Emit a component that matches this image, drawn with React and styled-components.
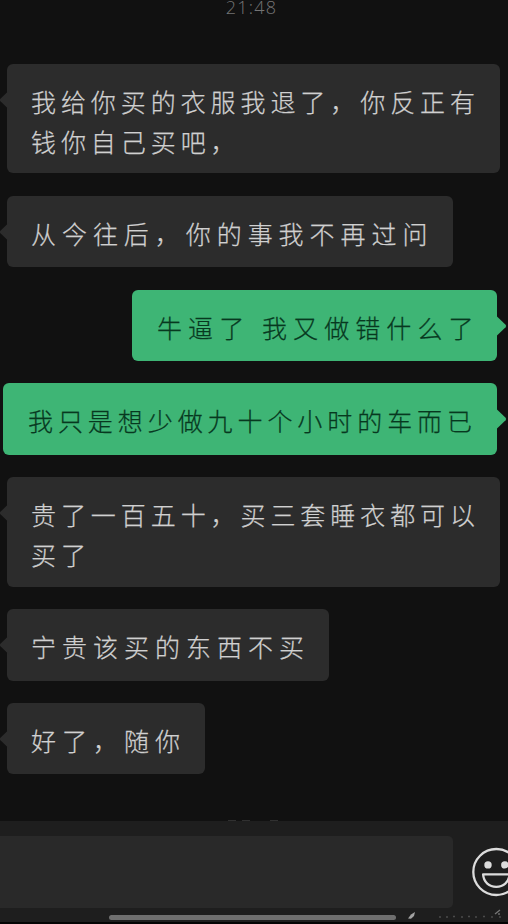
import React from 'react'
import styled, { createGlobalStyle } from 'styled-components';

const messages = [
    { id: 1, lines: ["我给你买的衣服我退了，你反正有", "钱你自己买吧，"], width: 493, pitch: 29.93 },
    { id: 2, lines: ["从今往后，你的事我不再过问"], width: 446, pitch: 30.95 },
    { id: 3, mine: true, lines: ["牛逼了 我又做错什么了"], width: 365, pitch: 31.1 },
    { id: 4, mine: true, lines: ["我只是想少做九十个小时的车而已"], width: 494, pitch: 29.93 },
    { id: 5, lines: ["贵了一百五十，买三套睡衣都可以", "买了"], width: 493, pitch: 29.93 },
    { id: 6, lines: ["宁贵该买的东西不买"], width: 322, pitch: 31 },
    { id: 7, lines: ["好了，随你"], width: 198, pitch: 31 },
]

export default function App() {
    return (
        <>
            <GlobalStyle />
            <Screen>
                <TimeText>21:48</TimeText>
                <MessageList>
                    {messages.map((m) => (
                        <Message key={m.id} {...m} />
                    ))}
                </MessageList>
                <NextTime>
                    <i /><i /><i />
                </NextTime>
                <InputBar>
                    <InputField />
                    <SmileIcon />
                </InputBar>
                <BottomArea>
                    <HomeIndicator />
                    <Specks />
                </BottomArea>
            </Screen>
        </>
    )
}

function Message(props) {
    return (
        <Bubble $mine={props.mine} $width={props.width} $double={props.lines.length > 1}>
            <Tail $mine={props.mine} viewBox="0 0 10 20">
                <path d={props.mine ? "M0 0.5 L8.6 8.8 Q9.8 10 8.6 11.2 L0 19.5 Z" : "M10 0.5 L1.4 8.8 Q0.2 10 1.4 11.2 L10 19.5 Z"} />
            </Tail>
            {props.lines.map((line) => (
                <Line key={line} $pitch={props.pitch}>{line}</Line>
            ))}
        </Bubble>
    )
}

function SmileIcon() {
    return (
        <Smile viewBox="0 0 50 50">
            <circle cx="25.3" cy="25" r="23" fill="none" stroke="#dcdcdc" strokeWidth="2.3" />
            <circle cx="17" cy="17.9" r="3.7" fill="#dcdcdc" />
            <circle cx="33.8" cy="17.9" r="3.7" fill="#dcdcdc" />
            <path d="M12.1 27.4 H38.5 C37.9 35.4 32.3 39.8 25.3 39.8 S12.7 35.4 12.1 27.4 Z" fill="none" stroke="#dcdcdc" strokeWidth="2.3" strokeLinejoin="round" />
        </Smile>
    )
}

function Specks() {
    return (
        <SpeckArea viewBox="0 0 100 16">
            <path d="M1 9.5 L4 5.5 L8 3 L7 7 L4 9.8 Z" fill="#a2a2a2" />
            <path d="M32 8 H34 M39 8 H41 M46 7.5 H48 M54 8 H56 M61 7.5 H63 M68 8 H70 M76 7.5 H78 M84 8 H86 M92 8 H94" stroke="#4b4b4b" strokeWidth="1.3" />
            <path d="M88 5 L93 1 M92 4 V6" stroke="#777" strokeWidth="1.3" />
        </SpeckArea>
    )
}

const GlobalStyle = createGlobalStyle`
body{
    margin:0;
    background:#111111;
    overflow:hidden;
}
`

const Screen = styled.div`
display:flex;
flex-direction:column;
width:508px;
height:924px;
overflow:hidden;
background:#111111;
font-family:"Noto Sans CJK SC",sans-serif;
`

const TimeText = styled.div`
flex-shrink:0;
height:64px;
padding-right:5px;
box-sizing:border-box;
text-align:center;
font-family:"Open Sans","Noto Sans CJK SC",sans-serif;
font-size:18px;
font-weight:300;
line-height:15px;
letter-spacing:1.2px;
color:#747474;
`

const MessageList = styled.div`
display:flex;
flex-direction:column;
gap:22.35px;
flex-shrink:0;
height:755.5px;
padding:0 11px 0 7px;
box-sizing:border-box;
`

const Bubble = styled.div`
position:relative;
flex-shrink:0;
align-self:${props => props.$mine ? "flex-end" : "flex-start"};
width:${props => props.$width}px;
height:${props => props.$double ? "109.4px" : "71.5px"};
margin-left:${props => props.$mine ? "-4px" : "0"};
padding:17px 0 0 24px;
padding-left:${props => props.$mine ? "25px" : "24px"};
box-sizing:border-box;
border-radius:6px;
background:${props => props.$mine ? "#3eb575" : "#2c2c2c"};
color:${props => props.$mine ? "#07381f" : "#d0d0d0"};
`

const Tail = styled.svg`
position:absolute;
top:26px;
${props => props.$mine ? "right:-10px;" : "left:-8px;"}
width:10px;
height:20px;
fill:${props => props.$mine ? "#3eb575" : "#2c2c2c"};
`

const Line = styled.div`
height:40px;
line-height:40px;
font-size:25px;
font-weight:300;
letter-spacing:${props => props.$pitch - 25}px;
white-space:pre;
-webkit-text-stroke:0.25px currentColor;
`

// only the top edge of the next timestamp shows above the input bar
const NextTime = styled.div`
display:flex;
flex-shrink:0;
gap:6px;
height:1px;
padding-left:228px;

i{
    width:8px;
    height:1px;
    background:#303030;
}
i:last-child{
    margin-left:14px;
}
`

const InputBar = styled.div`
display:flex;
align-items:flex-start;
gap:18px;
flex-shrink:0;
height:88px;
padding-top:15.5px;
box-sizing:border-box;
background:#1e1e1e;
`

const InputField = styled.div`
flex-shrink:0;
width:453px;
height:72px;
border-radius:0 5px 5px 0;
background:#292929;
`

const Smile = styled.svg`
flex-shrink:0;
width:50px;
height:50px;
margin-top:11px;
`

const BottomArea = styled.div`
display:flex;
align-items:flex-start;
gap:11px;
height:16px;
padding-left:109px;
background:linear-gradient(#1e1e1e 0 13px,#040404 13px);
`

const HomeIndicator = styled.div`
flex-shrink:0;
width:287px;
height:5px;
margin-top:6.5px;
border-radius:3px;
background:#6f6f6f;
`

const SpeckArea = styled.svg`
flex-shrink:0;
width:100px;
height:16px;
`
